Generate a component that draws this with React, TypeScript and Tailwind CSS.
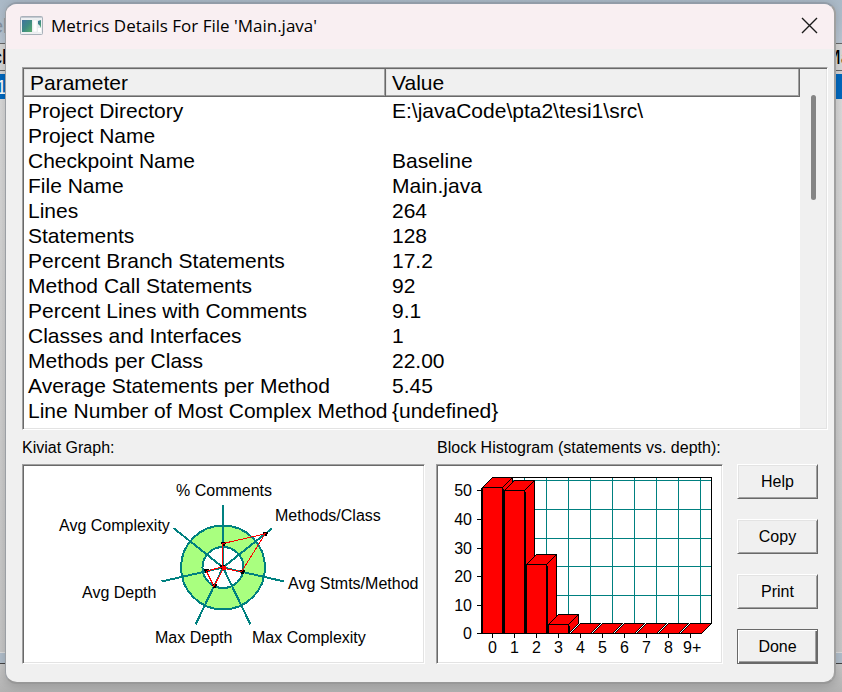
const metrics = [
  ['Project Directory', 'E:\\javaCode\\pta2\\tesi1\\src\\'],
  ['Project Name', ''],
  ['Checkpoint Name', 'Baseline'],
  ['File Name', 'Main.java'],
  ['Lines', '264'],
  ['Statements', '128'],
  ['Percent Branch Statements', '17.2'],
  ['Method Call Statements', '92'],
  ['Percent Lines with Comments', '9.1'],
  ['Classes and Interfaces', '1'],
  ['Methods per Class', '22.00'],
  ['Average Statements per Method', '5.45'],
  ['Line Number of Most Complex Method', '{undefined}'],
];

// Axes run clockwise from the top, value is the distance from the centre
const kiviatAxes = [
  { label: '% Comments', value: 24, x: 152, y: 30 },
  { label: 'Methods/Class', value: 54, x: 251, y: 55 },
  { label: 'Avg Stmts/Method', value: 19, x: 264, y: 123 },
  { label: 'Max Complexity', value: 1, x: 228, y: 177 },
  { label: 'Max Depth', value: 21, x: 131, y: 177 },
  { label: 'Avg Depth', value: 17, x: 58, y: 132 },
  { label: 'Avg Complexity', value: 1, x: 35, y: 65 },
];

const blocks = [
  { depth: '0', top: 21.5 },
  { depth: '1', top: 24.5 },
  { depth: '2', top: 98.5 },
  { depth: '3', top: 158.5 },
  { depth: '4', top: 167.5 },
  { depth: '5', top: 167.5 },
  { depth: '6', top: 167.5 },
  { depth: '7', top: 167.5 },
  { depth: '8', top: 167.5 },
  { depth: '9+', top: 167.5 },
];

const yTicks = [
  { label: '50', y: 24.5 },
  { label: '40', y: 53.5 },
  { label: '30', y: 82.5 },
  { label: '20', y: 110.5 },
  { label: '10', y: 139.5 },
  { label: '0', y: 167.5 },
];

const BASE = 167.5;
const sunken =
  'border border-t-[#a0a0a0] border-l-[#a0a0a0] border-r-white border-b-white bg-white p-px shadow-[inset_1px_1px_0_#696969,inset_-1px_-1px_0_#e3e3e3]';

function polar(index: number, radius: number) {
  const angle = (index * 2 * Math.PI) / 7;
  return { x: 199 + radius * Math.sin(angle), y: 101.5 - radius * Math.cos(angle) };
}

function KiviatGraph() {
  const points = kiviatAxes.map((axis, i) => polar(i, axis.value));

  return (
    <svg viewBox="0 0 399 196" className="block h-[196px] w-full" role="img" aria-labelledby="kiviat-title">
      <g shapeRendering="crispEdges">
        <circle cx="199" cy="101.5" r="42" fill="#a9ff7f" stroke="#008080" strokeWidth="2" />
        <circle cx="199" cy="101.5" r="20.5" fill="#fff" stroke="#008080" strokeWidth="2" />
        {kiviatAxes.map((axis, i) => {
          const end = polar(i, 63);
          return <line key={axis.label} x1="199" y1="101.5" x2={end.x} y2={end.y} stroke="#008080" strokeWidth="2" />;
        })}
        {points.map((p, i) => (
          <path key={i} d={`M${p.x - 2} ${p.y - 2}h5v2h-1v2h-3v-2h-1z`} fill="#000" />
        ))}
        <polygon points={points.map((p) => `${p.x},${p.y}`).join(' ')} fill="none" stroke="#f00" strokeWidth="1" />
        <rect x="198" y="100" width="4" height="4" fill="#f00" />
      </g>
      {kiviatAxes.map((axis) => (
        <text key={axis.label} x={axis.x} y={axis.y} fontSize="16">
          {axis.label}
        </text>
      ))}
    </svg>
  );
}

function BlockHistogram() {
  return (
    <svg viewBox="0 0 283 196" className="block h-[196px] w-full" role="img" aria-labelledby="histogram-title">
      <g shapeRendering="crispEdges" fill="none">
        {/* Back wall grid */}
        {[86.5, 108.5, 130.5, 152.5, 174.5, 196.5, 218.5, 240.5, 262.5].map((x) => (
          <path key={x} d={`M${x} 12V157`} stroke="#008080" />
        ))}
        {[14.5, 43.5, 72.5, 100.5, 129.5].map((y) => (
          <path key={y} d={`M54 ${y}H273`} stroke="#008080" />
        ))}
        <path d="M54.5 11.5H273.5V157.5H54.5" stroke="#000" />

        {/* Floor */}
        <path d="M44.5 167.5L54.5 157.5H273.5L263.5 167.5Z" fill="#f00" stroke="#000" />

        {blocks.map(({ depth, top }, i) => {
          const x = 44.5 + i * 22;
          if (top === BASE) {
            return (
              <g key={depth}>
                <path d={`M${x - 1} ${BASE}l10 -10`} stroke="#fff" strokeWidth="2" />
                <path d={`M${x - 2} ${BASE}l10 -10M${x} ${BASE}l10 -10`} stroke="#000" />
              </g>
            );
          }
          return (
            <g key={depth} fill="#f00" stroke="#000">
              <path d={`M${x + 20} ${top}l10 -10V${BASE - 10}l-10 10Z`} />
              <path d={`M${x} ${top}l10 -10h20l-10 10Z`} />
              <path d={`M${x} ${top}h20V${BASE}h-20Z`} />
              <path d={`M${x + 21} ${top + 1}V${BASE}`} />
            </g>
          );
        })}

        {yTicks.map((tick) => (
          <path key={tick.label} d={`M39 ${tick.y}h6`} stroke="#000" />
        ))}
        {blocks.map(({ depth }, i) => (
          <path key={depth} d={`M${54.5 + i * 22} 167v5`} stroke="#000" />
        ))}
        <path d="M43.5 22V168M43 167.5H264" stroke="#000" />
      </g>
      {yTicks.map((tick) => (
        <text key={tick.label} x="34" y={tick.y + 5} textAnchor="end" fontSize="16">
          {tick.label}
        </text>
      ))}
      {blocks.map(({ depth }, i) => (
        <text key={depth} x={50 + i * 22 + (depth === '9+' ? -3 : 0)} y="187" fontSize="16">
          {depth}
        </text>
      ))}
    </svg>
  );
}

function DialogButton({ label, primary = false }: { label: string; primary?: boolean }) {
  return (
    <button
      type="button"
      className={
        primary
          ? 'h-[35px] w-full border border-[#696969] bg-[#f0f0f0] text-base shadow-[inset_1px_1px_0_#fff,inset_-1px_-1px_0_#696969,inset_-2px_-2px_0_#a0a0a0]'
          : 'h-[35px] w-full border border-t-white border-l-white border-r-[#696969] border-b-[#696969] bg-[#f0f0f0] text-base shadow-[inset_1px_1px_0_#e3e3e3,inset_-1px_-1px_0_#a0a0a0]'
      }
    >
      {label}
    </button>
  );
}

// Parent window that shows round the edges of the dialog
function ParentWindow() {
  return (
    <div className="absolute inset-0 flex flex-col overflow-hidden bg-[#d6d6d6] text-xl" aria-hidden="true">
      <div className="flex h-[43px] items-center bg-linear-to-b from-[#abbac8] to-[#bdc9d6] pt-2 text-[#8793a0]">
        <span className="-ml-2">el</span>
      </div>
      <div className="flex h-7 items-center justify-between border-y border-[#696969] bg-[#d9d9d9]">
        <span className="-ml-2">cl</span>
        <span className="-mr-5">Max</span>
      </div>
      <div className="mt-[3px] flex h-[25px] items-center bg-[#0069c0] text-white">
        <span className="-ml-1">1</span>
      </div>
      <div className="flex-1 bg-linear-to-b from-[#dcdcdc] to-[#c9c9c9]" />
      <div className="h-3 border-t border-b border-t-[#dedede] border-b-[#444] bg-[#b3c0cd]" />
      <div className="h-7 bg-linear-to-b from-[#cacaca] to-[#b2b2b2]" />
    </div>
  );
}

export default function App() {
  return (
    <div className="relative min-h-screen overflow-hidden pt-[2px] pr-[6px] pb-2 pl-[5px] font-['Liberation_Sans',Arial,sans-serif] text-black">
      <ParentWindow />

      <div
        role="dialog"
        aria-labelledby="dialog-title"
        className="relative overflow-hidden rounded-[12px] border-2 border-l border-t-[#929ca8] border-r-[#a0a0a0] border-b-[#989898] border-l-[#9b9fa4] bg-[#f0f0f0] shadow-[0_2px_12px_rgba(0,0,0,0.2)]"
      >
        <header className="flex h-[45px] items-center justify-between bg-[#f9eff2] pr-4 pb-[2px] pl-[14px]">
          <div className="flex items-center gap-2">
            <svg width="23" height="19" viewBox="0 0 23 19" aria-hidden="true">
              <defs>
                <linearGradient id="pane" x1="0" y1="0" x2="1" y2="1">
                  <stop offset="0" stopColor="#3f739f" />
                  <stop offset="0.5" stopColor="#3d8a83" />
                  <stop offset="1" stopColor="#5aae6c" />
                </linearGradient>
              </defs>
              <rect x="0.5" y="0.5" width="22" height="18" rx="1" fill="#eef0f2" stroke="#a9b1ba" />
              <path d="M1 1.5H22" stroke="#c3cad2" />
              <rect x="2" y="4" width="10" height="12" fill="url(#pane)" />
              <rect x="13" y="4" width="4" height="12" fill="#fff" stroke="#dfe3e7" strokeWidth="0.5" />
              <rect x="18" y="4" width="3" height="8" fill="#e4ecee" />
              <path d="M21 4v8q-1 -3 -3 -4v-3z" fill="url(#pane)" />
              <rect x="18" y="12" width="3" height="4" fill="#fff" />
            </svg>
            <h1 id="dialog-title" className="font-['Open_Sans','Segoe_UI',sans-serif] text-[17px] leading-6">
              Metrics Details For File 'Main.java'
            </h1>
          </div>
          <button type="button" aria-label="Close">
            <svg width="17" height="17" viewBox="0 0 17 17" fill="none" stroke="#1a1a1a" strokeWidth="1.4" aria-hidden="true">
              <path d="M1 1L16 16M16 1L1 16" />
            </svg>
          </button>
        </header>

        <main className="pt-[18px] pr-4 pb-[18px] pl-4">
          {/* Metrics list */}
          <div className={`-mr-[10px] flex ${sunken}`}>
            <div className="flex-1 pb-[6px]">
              <table className="w-full table-fixed border-collapse text-left text-[21px]">
                <colgroup>
                  <col className="w-[362px]" />
                  <col />
                </colgroup>
                <thead>
                  <tr className="h-7 bg-[#f0f0f0] leading-6">
                    <th
                      scope="col"
                      className="px-[6px] font-normal shadow-[inset_-1px_-1px_0_#696969,inset_-2px_-2px_0_#a0a0a0,inset_1px_1px_0_#e3e3e3]"
                    >
                      Parameter
                    </th>
                    <th
                      scope="col"
                      className="px-[6px] font-normal shadow-[inset_-1px_-1px_0_#696969,inset_-2px_-2px_0_#a0a0a0,inset_1px_1px_0_#e3e3e3]"
                    >
                      Value
                    </th>
                  </tr>
                </thead>
                <tbody>
                  {metrics.map(([name, value]) => (
                    <tr key={name} className="h-[25px] leading-[23px]">
                      <td className="pt-[2px] pl-1 whitespace-nowrap">{name}</td>
                      <td className="pt-[2px] pl-[6px] whitespace-nowrap">{value}</td>
                    </tr>
                  ))}
                </tbody>
              </table>
            </div>
            <div className="flex w-[26px] justify-center bg-[#f0f0f0] pt-[26px]">
              <div className="h-[105px] w-[5px] rounded-full bg-[#858585]" />
            </div>
          </div>

          <div className="flex">
            <section className="min-w-0 flex-[403]">
              <h2 id="kiviat-title" className="h-[34px] pt-[2px] text-base leading-8">
                Kiviat Graph:
              </h2>
              <div className={sunken}>
                <KiviatGraph />
              </div>
            </section>

            <section className="ml-[11px] min-w-0 flex-[287]">
              <h2 id="histogram-title" className="h-[34px] pt-[2px] pl-px text-base leading-8 whitespace-nowrap">
                Block Histogram (statements vs. depth):
              </h2>
              <div className={sunken}>
                <BlockHistogram />
              </div>
            </section>

            <div className="mt-[34px] ml-[14px] flex w-[81px] flex-col gap-5">
              <DialogButton label="Help" />
              <DialogButton label="Copy" />
              <DialogButton label="Print" />
              <DialogButton label="Done" primary />
            </div>
          </div>
        </main>
      </div>
    </div>
  );
}
